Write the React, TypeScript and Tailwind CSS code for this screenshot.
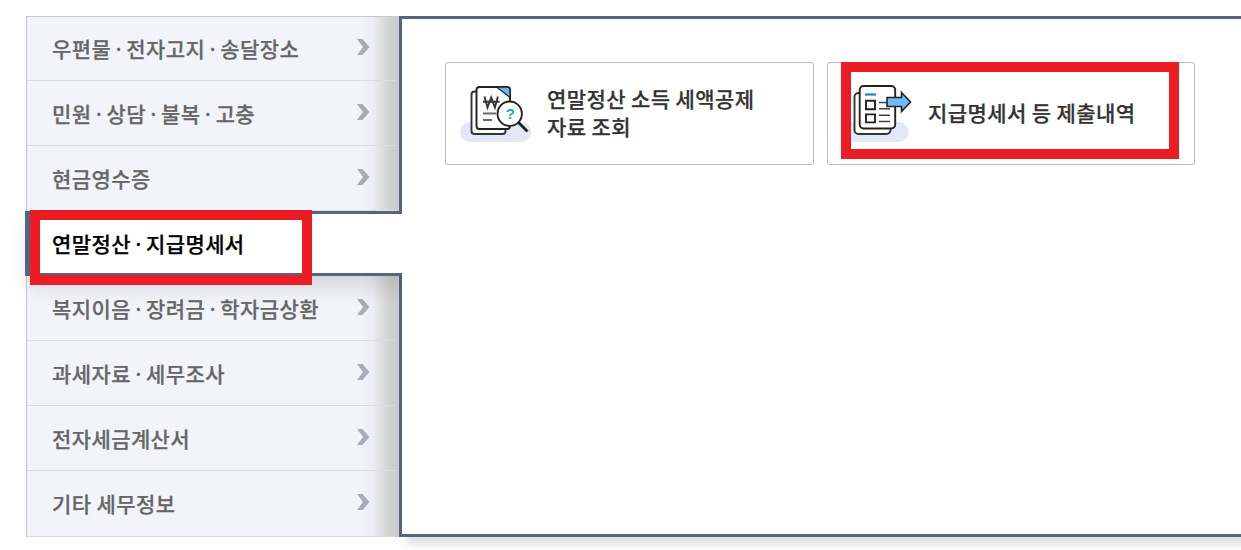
import { Fragment } from 'react'
import clsx from 'clsx'

const menus = [
  '우편물 · 전자고지 · 송달장소',
  '민원 · 상담 · 불복 · 고충',
  '현금영수증',
  '연말정산 · 지급명세서',
  '복지이음 · 장려금 · 학자금상환',
  '과세자료 · 세무조사',
  '전자세금계산서',
  '기타 세무정보',
]

const activeIndex = 3

function Arrow() {
  return (
    <svg className="mb-[3px] h-4 w-[13px] shrink-0" viewBox="0 0 13 16">
      <path d="M0 0h5.500L12.500 8 5.500 16H0l6-8z" fill="#a9acb8" />
    </svg>
  )
}

// The middle dot is narrow, so it comes from the Latin font
function MenuLabel({ text }: { text: string }) {
  return (
    <span className="pt-px whitespace-nowrap">
      {text.split('·').map((part, index) => (
        <Fragment key={index}>
          {index > 0 && <span className="-mx-[0.65px] font-['Noto_Sans',sans-serif] leading-none font-medium">·</span>}
          {part}
        </Fragment>
      ))}
    </span>
  )
}

function IncomeIcon() {
  return (
    <svg className="h-[61px] w-[72px] shrink-0 overflow-visible" viewBox="0 0 72 61">
      <rect x="-1" y="39" width="71.500" height="20" rx="10" fill="#e2e8f5" />
      <rect x="10.500" y="8.500" width="34" height="42.500" rx="3" fill="#fff" stroke="#333" strokeWidth="1.900" />
      <path d="M18.500 4H46a3 3 0 0 1 3 3v36a3 3 0 0 1-3 3H18.500a3 3 0 0 1-3-3V7a3 3 0 0 1 3-3z" fill="#fff" stroke="#222" strokeWidth="1.900" />
      <path d="M35.500 4H46a3 3 0 0 1 3 3v7.500z" fill="#62b6f7" stroke="#222" strokeWidth="1.300" />
      <path d="M23.500 13.500l3 11 3.700-10 3.700 10 3-11M22 18.700h16.500" fill="none" stroke="#333" strokeWidth="1.900" />
      <path d="M22 30.500h13M22 37h9" stroke="#62697a" strokeWidth="1.900" />
      <path d="M57.500 39.500l9 9" stroke="#222" strokeWidth="2.800" />
      <circle cx="48.700" cy="30.700" r="12.200" fill="#fff" stroke="#222" strokeWidth="1.900" />
      <text x="49.300" y="36.300" textAnchor="middle" fontSize="15.500" fontWeight="700" letterSpacing="0" fontFamily="Liberation Sans, sans-serif" fill="#3795e5">?</text>
    </svg>
  )
}

function StatementIcon() {
  return (
    <svg className="h-[61px] w-[72px] shrink-0 overflow-visible" viewBox="0 0 72 61">
      <rect x="0" y="39" width="65.700" height="20" rx="10" fill="#e2e8f5" />
      <path d="M0 39h20v20H0z" fill="#e2e8f5" />
      <rect x="11.500" y="10" width="36" height="41" rx="4" fill="#fff" stroke="#333" strokeWidth="1.900" />
      <rect x="16.700" y="3" width="35.500" height="42.500" rx="4" fill="#fff" stroke="#222" strokeWidth="1.900" />
      <path d="M22 11.500h11" stroke="#1c7fcf" strokeWidth="2.200" />
      <path d="M23 17.800h9v8.400h-9zM23 31.400h9v8h-9z" fill="#fff" stroke="#222" strokeWidth="1.900" />
      <path d="M36 19.500h11M36 25.700h11M36 32.300h11M36 38.500h11" stroke="#444" strokeWidth="1.600" />
      <path d="M44 14.500h14.500V9.500L67.500 19l-9 9.500V23.500H44z" fill="#6cbcfb" stroke="#222" strokeWidth="1.600" />
    </svg>
  )
}

export default function App() {
  return (
    <div className="relative flex h-[550px] w-full overflow-hidden bg-white pt-4 pl-[26px] font-['Noto_Sans_CJK_KR',sans-serif] text-[21px] font-medium tracking-[0.4px] [-webkit-text-stroke:0.25px]">
      {/* Side menu */}
      <nav className="relative flex h-[521px] w-[373px] shrink-0 flex-col border-l border-[#c8c8cb] bg-[linear-gradient(to_right,#f3f4fa_0,#f3f4fa_334px,#ebedf2_346px,#dadada_357px,#cdcdcd_366px,#cccccc_372px)]">
        {menus.map((menu, index) =>
          index === activeIndex ? (
            <div
              key={menu}
              className="relative z-10 -ml-0.5 flex h-[65px] w-[377px] shrink-0 items-center border-y-[3px] border-l-[5px] border-[#55647f] bg-white pl-[22px] text-black shadow-[4px_10px_20px_rgba(0,0,0,0.13)] [clip-path:inset(0_0_-40px_-40px)]"
            >
              <MenuLabel text={menu} />
            </div>
          ) : (
            <div
              key={menu}
              className={clsx(
                'mr-1 flex shrink-0 items-center justify-between border-b border-[#dcdcdf] pr-[25px] pl-[25px] text-[#666]',
                index === menus.length - 1 ? 'h-[66px]' : 'h-[65px]',
                index === 0 && 'shadow-[inset_0_1px_0_#c8c8cb]'
              )}
            >
              <MenuLabel text={menu} />
              <Arrow />
            </div>
          )
        )}
      </nav>

      {/* Content */}
      <main className="flex h-[521px] flex-1 items-start gap-[13px] border-y-[3px] border-l-[3px] border-[#55647f] bg-white pt-[43px] pl-[43px] text-[#333] shadow-[8px_8px_8px_rgba(0,0,0,0.12)]">
        <div className="flex h-[103px] w-[369px] items-center rounded-[3px] border border-[#bbb] pl-[15px]">
          <IncomeIcon />
          <p className="ml-[14px] pb-[3px] leading-7">
            연말정산 소득 세액공제
            <br />
            자료 조회
          </p>
        </div>
        <div className="flex h-[103px] w-[368px] items-center rounded-[3px] border border-[#bbb] pl-[15px]">
          <StatementIcon />
          <p className="ml-[13px] pb-[3px] leading-7">지급명세서 등 제출내역</p>
        </div>
      </main>

      {/* Highlight boxes */}
      <div className="absolute top-[210px] left-[30px] z-20 h-[75px] w-[282px] border-10 border-[#ed1c24]" />
      <div className="absolute top-[62px] left-[841px] z-20 h-[97px] w-[338px] border-10 border-[#ed1c24]" />
    </div>
  )
}
